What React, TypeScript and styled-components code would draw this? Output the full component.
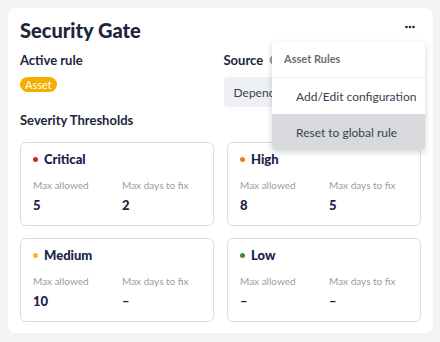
import styled, { createGlobalStyle } from 'styled-components'

const GlobalStyle = createGlobalStyle`
  html, body {
    margin: 0;
    padding: 0;
    background: #f2f3f5;
    font-family: Lato, "Open Sans", sans-serif;
    color: #1b2638;
  }
`

const Page = styled.div`
  padding: 8px 7px 9px 8px;
`

const Card = styled.div`
  position: relative;
  background: #ffffff;
  border-radius: 8px;
  padding: 12px 12px 11px 12px;
`

const Header = styled.div`
  display: flex;
  justify-content: space-between;
  align-items: center;
  height: 20px;
`

const Title = styled.h1`
  margin: 0;
  font-size: 20px;
  font-weight: 900;
  line-height: 20px;
`

const Kebab = styled.button`
  border: none;
  background: none;
  padding: 0 6px 6px;
  color: #1b2638;
  display: flex;
  cursor: pointer;
`

const InfoRow = styled.div`
  display: grid;
  grid-template-columns: 1fr 1fr;
  gap: 6px;
  margin-top: 12px;
`

const Field = styled.div`
  display: flex;
  flex-direction: column;
  gap: 9px;
`

const Label = styled.div`
  display: flex;
  align-items: center;
  gap: 6px;
  font-size: 13px;
  font-weight: 700;
  height: 16px;
`

const Badge = styled.span`
  align-self: flex-start;
  background: #f4ae00;
  color: #ffffff;
  font-size: 11px;
  border-radius: 10px;
  padding: 0 5px;
  line-height: 15px;
`

const SourceBox = styled.div`
  background: #eef0f3;
  border-radius: 4px;
  padding: 0 10px;
  height: 30px;
  display: flex;
  align-items: center;
  font-size: 12px;
  color: #3a4252;
  width: 150px;
`

const SectionTitle = styled.div`
  font-size: 13px;
  font-weight: 700;
  height: 16px;
  display: flex;
  align-items: center;
  margin-top: 5px;
  margin-bottom: 14px;
`

const Grid = styled.div`
  display: grid;
  grid-template-columns: 1fr 1fr;
  column-gap: 13px;
  row-gap: 12px;
`

const Threshold = styled.div`
  border: 1px solid #dcdde2;
  border-radius: 6px;
  padding: 8px 12px 10px 12px;
  height: 84px;
  box-sizing: border-box;
`

const SevTitle = styled.div`
  display: flex;
  align-items: center;
  gap: 6px;
  height: 16px;
  font-size: 13px;
  font-weight: 900;
  color: #16234a;
`

const Dot = styled.span<{ $color: string }>`
  width: 5px;
  height: 5px;
  border-radius: 50%;
  background: ${(p) => p.$color};
`

const Stats = styled.div`
  display: grid;
  grid-template-columns: 89px 1fr;
  margin-top: 12px;
`

const Stat = styled.div`
  display: flex;
  flex-direction: column;
  gap: 7px;
`

const StatLabel = styled.div`
  font-size: 10px;
  line-height: 12px;
  color: #9a9ca3;
`

const StatValue = styled.div`
  font-size: 13px;
  line-height: 14px;
  font-weight: 900;
  color: #16234a;
`

const Menu = styled.div`
  position: absolute;
  top: 34px;
  left: 264px;
  width: 153px;
  background: #ffffff;
  border-radius: 4px;
  box-shadow: 0 2px 6px rgba(0, 0, 0, 0.18);
  overflow: hidden;
`

const MenuHeader = styled.div`
  font-size: 11px;
  font-weight: 700;
  color: #6b6e75;
  height: 36px;
  padding: 0 12px 2px;
  box-sizing: border-box;
  display: flex;
  align-items: center;
  border-bottom: 1px solid #eceef1;
`

const MenuItem = styled.div<{ $active?: boolean }>`
  font-size: 12px;
  color: #3a4252;
  padding: 0 8px 0 24px;
  height: 36px;
  white-space: nowrap;
  display: flex;
  align-items: center;
  background: ${(p) => (p.$active ? '#d7d9dd' : 'transparent')};
`

const thresholds = [
  { name: 'Critical', color: '#d0261b', allowed: '5', days: '2' },
  { name: 'High', color: '#f07f0b', allowed: '8', days: '5' },
  { name: 'Medium', color: '#f6b72a', allowed: '10', days: '–' },
  { name: 'Low', color: '#3f8a3b', allowed: '–', days: '–' },
]

export default function App() {
  return (
    <Page>
      <GlobalStyle />
      <Card>
        <Header>
          <Title>Security Gate</Title>
          <Kebab>
            <svg width="10" height="4" viewBox="0 0 10 4" fill="currentColor">
              <circle cx="1.5" cy="2" r="1.3" />
              <circle cx="5" cy="2" r="1.3" />
              <circle cx="8.5" cy="2" r="1.3" />
            </svg>
          </Kebab>
        </Header>
        <InfoRow>
          <Field>
            <Label>Active rule</Label>
            <Badge>Asset</Badge>
          </Field>
          <Field>
            <Label>
              Source
              <svg width="10" height="10" viewBox="0 0 10 10">
                <circle cx="5" cy="5" r="4.5" fill="#9a9da3" />
              </svg>
            </Label>
            <SourceBox>Dependency rules</SourceBox>
          </Field>
        </InfoRow>
        <SectionTitle>Severity Thresholds</SectionTitle>
        <Grid>
          {thresholds.map((t) => (
            <Threshold key={t.name}>
              <SevTitle>
                <Dot $color={t.color} />
                {t.name}
              </SevTitle>
              <Stats>
                <Stat>
                  <StatLabel>Max allowed</StatLabel>
                  <StatValue>{t.allowed}</StatValue>
                </Stat>
                <Stat>
                  <StatLabel>Max days to fix</StatLabel>
                  <StatValue>{t.days}</StatValue>
                </Stat>
              </Stats>
            </Threshold>
          ))}
        </Grid>
        <Menu>
          <MenuHeader>Asset Rules</MenuHeader>
          <MenuItem>Add/Edit configuration</MenuItem>
          <MenuItem $active>Reset to global rule</MenuItem>
        </Menu>
      </Card>
    </Page>
  )
}
